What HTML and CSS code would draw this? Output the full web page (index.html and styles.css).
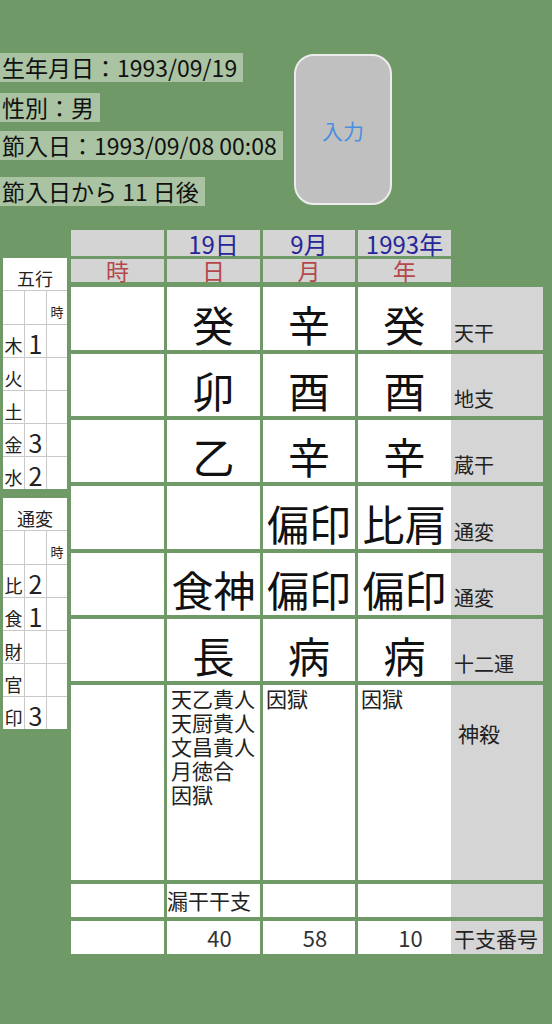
FILE: index.html
```html
<!DOCTYPE html>
<html lang="ja">
<head>
  <meta charset="UTF-8">
  <title>命式</title>
  <link rel="stylesheet" href="styles.css">
</head>
<body>

  <div class="top">
    <div class="info">
      <span class="info-line">生年月日：1993/09/19</span>
      <span class="info-line l2">性別：男</span>
      <span class="info-line l3">節入日：1993/09/08 00:08</span>
      <span class="info-line l4">節入日から 11 日後</span>
    </div>
    <button class="input-btn">入力</button>
  </div>

  <div class="main">
    <div class="side">
      <!-- 五行 -->
      <div class="count-table">
        <div class="ct-head">五行</div>
        <div></div><div></div><div class="ct-small">時</div>
        <div class="ct-name">木</div><div class="ct-num">1</div><div></div>
        <div class="ct-name">火</div><div class="ct-num"></div><div></div>
        <div class="ct-name">土</div><div class="ct-num"></div><div></div>
        <div class="ct-name">金</div><div class="ct-num">3</div><div></div>
        <div class="ct-name">水</div><div class="ct-num">2</div><div></div>
      </div>
      <!-- 通変 -->
      <div class="count-table">
        <div class="ct-head">通変</div>
        <div></div><div></div><div class="ct-small">時</div>
        <div class="ct-name">比</div><div class="ct-num">2</div><div></div>
        <div class="ct-name">食</div><div class="ct-num">1</div><div></div>
        <div class="ct-name">財</div><div class="ct-num"></div><div></div>
        <div class="ct-name">官</div><div class="ct-num"></div><div></div>
        <div class="ct-name">印</div><div class="ct-num">3</div><div></div>
      </div>
    </div>

    <div class="chart">
      <div class="chart-head">
        <div class="hcell date"></div>
        <div class="hcell date">19日</div>
        <div class="hcell date">9月</div>
        <div class="hcell date">1993年</div>
        <div class="hcell pillar">時</div>
        <div class="hcell pillar">日</div>
        <div class="hcell pillar">月</div>
        <div class="hcell pillar">年</div>
      </div>

      <div class="chart-body">
        <!-- 天干 -->
        <div class="cell"></div>
        <div class="cell big">癸</div>
        <div class="cell big">辛</div>
        <div class="cell big">癸</div>
        <div class="label">天干</div>
        <!-- 地支 -->
        <div class="cell"></div>
        <div class="cell big">卯</div>
        <div class="cell big">酉</div>
        <div class="cell big">酉</div>
        <div class="label">地支</div>
        <!-- 蔵干 -->
        <div class="cell"></div>
        <div class="cell big">乙</div>
        <div class="cell big">辛</div>
        <div class="cell big">辛</div>
        <div class="label">蔵干</div>
        <!-- 通変 -->
        <div class="cell"></div>
        <div class="cell big"></div>
        <div class="cell big">偏印</div>
        <div class="cell big">比肩</div>
        <div class="label">通変</div>
        <!-- 通変 (地支) -->
        <div class="cell"></div>
        <div class="cell big">食神</div>
        <div class="cell big">偏印</div>
        <div class="cell big">偏印</div>
        <div class="label">通変</div>
        <!-- 十二運 -->
        <div class="cell"></div>
        <div class="cell big">長</div>
        <div class="cell big">病</div>
        <div class="cell big">病</div>
        <div class="label">十二運</div>
        <!-- 神殺 -->
        <div class="cell"></div>
        <div class="cell list first">天乙貴人<br>天厨貴人<br>文昌貴人<br>月徳合<br>因獄</div>
        <div class="cell list">因獄</div>
        <div class="cell list">因獄</div>
        <div class="label top-label">神殺</div>
        <!-- 漏干 -->
        <div class="cell"></div>
        <div class="cell leak">漏干干支</div>
        <div class="cell"></div>
        <div class="cell"></div>
        <div class="label"></div>
        <!-- 干支番号 -->
        <div class="cell"></div>
        <div class="cell num">40</div>
        <div class="cell num">58</div>
        <div class="cell num">10</div>
        <div class="label mid-label">干支番号</div>
      </div>
    </div>
  </div>

</body>
</html>
```

FILE: styles.css
```css
body {
  margin: 0;
  background: #6f9967;
  font-family: "Noto Sans CJK JP", "Noto Sans", sans-serif;
  color: #111;
}

/* top info */
.top {
  display: flex;
  align-items: flex-start;
  padding-top: 53px;
}

.info {
  flex: 0 0 294px;
  display: flex;
  flex-direction: column;
  align-items: flex-start;
}

.info-line {
  height: 29px;
  line-height: 29px;
  font-size: 23px;
  padding: 0 6px 0 2px;
  background: #a9c3a3;
  white-space: nowrap;
}

.l2 { margin-top: 11px; }
.l3 { margin-top: 9px; }
.l4 { margin-top: 17px; }

.input-btn {
  margin-top: 1px;
  width: 98px;
  height: 151px;
  padding: 0;
  border: 2px solid #ececec;
  border-radius: 20px;
  background: #c0c0c0;
  color: #4a8fe0;
  font-family: "Noto Sans CJK JP", sans-serif;
  font-size: 21px;
}

/* chart area */
.main {
  display: flex;
  align-items: flex-start;
  margin-top: 24px;
}

.side {
  width: 64px;
  margin-left: 3px;
  margin-top: 28px;
}

.count-table {
  display: grid;
  grid-template-columns: 21px 21px 20px;
  grid-template-rows: 32px 33px repeat(5, 32px);
  gap: 1px;
  background: #c9c9c9;
  color: #222;
}

.count-table + .count-table {
  margin-top: 9px;
}

.count-table > div {
  background: #fff;
  display: flex;
  align-items: flex-end;
  justify-content: center;
}

.ct-head {
  grid-column: 1 / 4;
  font-size: 18px;
  line-height: 18px;
  padding-bottom: 3px;
}

.ct-small {
  font-size: 13px;
  line-height: 13px;
  padding-bottom: 6px;
}

.ct-name {
  font-size: 18px;
  line-height: 18px;
  padding-bottom: 3px;
}

.ct-num {
  font-size: 25px;
  line-height: 25px;
  padding-bottom: 1px;
}

.chart {
  margin-left: 4px;
}

.chart-head {
  display: grid;
  grid-template-columns: 93px 93px 92px 93px;
  grid-template-rows: 26px 23px;
  gap: 3px;
}

.hcell {
  background: #d4d4d4;
  text-align: center;
  white-space: nowrap;
}

.hcell.date {
  color: #26269a;
  font-size: 24px;
  line-height: 24px;
  padding-top: 2px;
}

.hcell.pillar {
  color: #b5484a;
  font-size: 23px;
  line-height: 23px;
}

.chart-body {
  margin-top: 5px;
  display: grid;
  grid-template-columns: 93px 93px 92px 93px 89px;
  grid-template-rows: 63px 62px 62px 63px 62px 62px 195px 33px 33px;
  column-gap: 3px;
  row-gap: 4px;
}

.cell {
  background: #fff;
}

.big {
  display: flex;
  align-items: flex-end;
  justify-content: center;
  font-size: 42px;
  line-height: 42px;
  padding-bottom: 5px;
  box-sizing: border-box;
  white-space: nowrap;
}

.label {
  margin-left: -3px;
  background: #d5d5d5;
  display: flex;
  align-items: flex-end;
  font-size: 20px;
  line-height: 20px;
  padding: 0 0 7px 3px;
  color: #222;
}

.label.top-label {
  align-items: flex-start;
  padding: 38px 0 0 7px;
  font-size: 21px;
  line-height: 21px;
}

.label.mid-label {
  align-items: center;
  padding: 0 0 0 3px;
  font-size: 21px;
}

.list {
  font-size: 21px;
  line-height: 24px;
  padding: 1px 0 0 3px;
  color: #222;
}

.list.first {
  padding-left: 4px;
}

.leak {
  font-size: 21px;
  line-height: 33px;
  color: #222;
}

.num {
  font-size: 22px;
  line-height: 33px;
  text-align: center;
  padding-left: 12px;
  color: #333;
}
```
